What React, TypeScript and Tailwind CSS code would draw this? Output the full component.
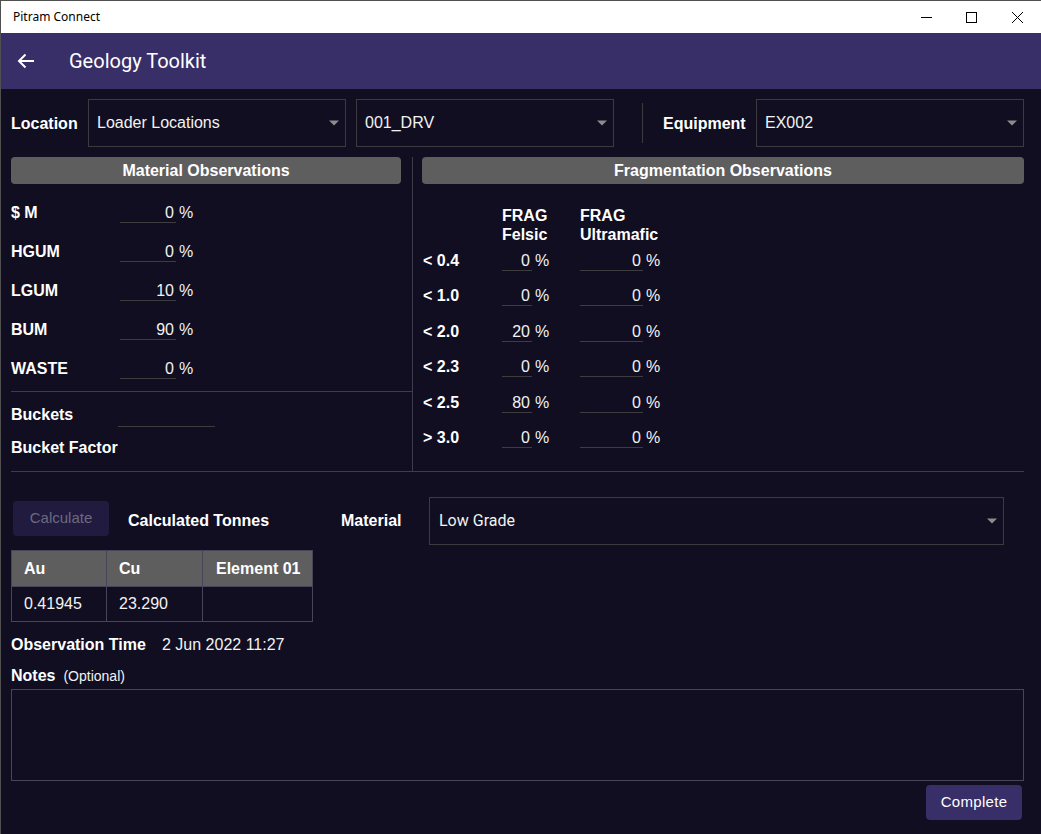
import React from "react";

const font = { fontFamily: '"Liberation Sans", Arial, sans-serif' };

function Caret() {
  return (
    <svg width="10" height="6" viewBox="0 0 10 6" className="shrink-0">
      <path d="M0 0.5 L10 0.5 L5 5.5 Z" fill="#8c8c8c" />
    </svg>
  );
}

function Select({ value, className }: { value: string; className: string }) {
  return (
    <div
      className={`flex items-center justify-between border border-[#3b3b3f] pl-[8px] pr-[6px] text-[16px] text-[#f2f2f2] ${className}`}
    >
      <span>{value}</span>
      <Caret />
    </div>
  );
}

function PctInput({ value, w }: { value: string; w: string }) {
  return (
    <div className="flex items-center">
      <div className={`h-[20px] ${w} border-b border-[#3d3d40] text-right pr-[2px] text-[16px] leading-[19px] text-[#f2f2f2]`}>
        {value}
      </div>
      <span className="ml-[3px] text-[16px] text-[#f2f2f2]">%</span>
    </div>
  );
}

const material = [
  ["$ M", "0"],
  ["HGUM", "0"],
  ["LGUM", "10"],
  ["BUM", "90"],
  ["WASTE", "0"],
];

const frag = [
  ["< 0.4", "0", "0"],
  ["< 1.0", "0", "0"],
  ["< 2.0", "20", "0"],
  ["< 2.3", "0", "0"],
  ["< 2.5", "80", "0"],
  ["> 3.0", "0", "0"],
];

export default function App() {
  return (
    <div
      style={font}
      className="w-[1041px] h-[834px] overflow-hidden bg-[#100e20] border-t border-l border-[#505050] flex flex-col text-white"
    >
      {/* Title bar */}
      <div className="h-[32px] bg-white flex items-center shrink-0">
        <span className="ml-[12px] text-[12px] text-black" style={{ fontFamily: '"Noto Sans", "Liberation Sans", sans-serif' }}>
          Pitram Connect
        </span>
        <div className="ml-auto flex items-center">
          <svg width="46" height="32" viewBox="0 0 46 32">
            <line x1="18" y1="16.5" x2="29" y2="16.5" stroke="#000" strokeWidth="1" />
          </svg>
          <svg width="46" height="32" viewBox="0 0 46 32">
            <rect x="17.5" y="11.5" width="10" height="10" fill="none" stroke="#000" strokeWidth="1" />
          </svg>
          <svg width="46" height="32" viewBox="0 0 46 32">
            <path d="M17 11 L28 22 M28 11 L17 22" stroke="#000" strokeWidth="1" />
          </svg>
        </div>
      </div>

      {/* Header */}
      <div className="h-[56px] bg-[#382e68] flex items-center shrink-0">
        <svg width="20" height="20" viewBox="0 0 20 20" className="ml-[15px]">
          <path d="M18 10 H3 M9.5 3.5 L3 10 L9.5 16.5" fill="none" stroke="#fff" strokeWidth="2" />
        </svg>
        <span className="ml-[33px] text-[20px] text-white" style={{ fontFamily: "Roboto, sans-serif" }}>
          Geology Toolkit
        </span>
      </div>

      {/* Content */}
      <div className="flex-1 flex flex-col pl-[10px] pr-[17px]">
        {/* Row 1 */}
        <div className="mt-[10px] flex items-center h-[48px]">
          <span className="w-[77px] font-bold text-[16px] mt-[1px]">Location</span>
          <Select value="Loader Locations" className="w-[258px] h-[48px]" />
          <Select value="001_DRV" className="ml-[10px] w-[258px] h-[48px]" />
          <div className="ml-[28px] w-px h-[40px] bg-[#3b3b3f]" />
          <span className="ml-[20px] w-[93px] font-bold text-[16px] mt-[1px]">Equipment</span>
          <Select value="EX002" className="w-[268px] h-[48px]" />
        </div>

        {/* Observations */}
        <div className="mt-[10px] flex">
          {/* Material */}
          <div className="w-[401px] flex flex-col">
            <div className="mr-[11px] h-[27px] rounded-[4px] bg-[#5f5e5f] flex items-center justify-center font-bold text-[16px]">
              Material Observations
            </div>
            <div className="mt-[10px] flex flex-col">
              {material.map(([l, v]) => (
                <div key={l} className="h-[38.8px] flex items-center">
                  <span className="w-[109px] font-bold text-[16px]">{l}</span>
                  <PctInput value={v} w="w-[56px]" />
                </div>
              ))}
            </div>
            <div className="mt-[3px] h-px bg-[#3e3b4a]" />
            <div className="mt-[12px] h-[22px] flex items-center">
              <span className="w-[107px] font-bold text-[16px]">Buckets</span>
              <div className="h-[22px] w-[97px] border-b border-[#3d3d40] mt-[2px]" />
            </div>
            <div className="mt-[11px] h-[22px] flex items-center">
              <span className="font-bold text-[16px]">Bucket Factor</span>
            </div>
          </div>
          <div className="w-px bg-[#3e3b4a]" />
          {/* Fragmentation */}
          <div className="flex-1 pl-[9px] flex flex-col">
            <div className="h-[27px] rounded-[4px] bg-[#5f5e5f] flex items-center justify-center font-bold text-[16px]">
              Fragmentation Observations
            </div>
            <div className="pt-[22px] flex pl-[80px] font-bold text-[16px] leading-[19px]">
              <div className="w-[78px]">
                FRAG
                <br />
                Felsic
              </div>
              <div>
                FRAG
                <br />
                Ultramafic
              </div>
            </div>
            <div className="flex flex-col -mt-[1px] pb-[15px]">
              {frag.map(([l, a, b]) => (
                <div key={l} className="h-[35.5px] flex items-center">
                  <span className="w-[80px] pl-[1px] font-bold text-[16px]">{l}</span>
                  <div className="w-[78px]">
                    <PctInput value={a} w="w-[30px]" />
                  </div>
                  <PctInput value={b} w="w-[63px]" />
                </div>
              ))}
            </div>
          </div>
        </div>
        <div className="h-px bg-[#3e3b4a]" />

        {/* Calculate row */}
        <div className="mt-[25px] h-[48px] flex items-center">
          <button className="ml-[2px] w-[96px] h-[35px] rounded-[4px] bg-[#211b3f] text-[15px] text-[#6c6a80] -mt-[6px]">
            Calculate
          </button>
          <span className="ml-[19px] w-[213px] font-bold text-[16px]">Calculated Tonnes</span>
          <span className="w-[88px] font-bold text-[16px]">Material</span>
          <div
            className="w-[575px] h-[48px] flex items-center justify-between border border-[#3b3b3f] pl-[9px] pr-[6px] text-[16px] text-[#f2f2f2]"
            style={{ fontFamily: "Roboto, sans-serif" }}
          >
            <span>Low Grade</span>
            <Caret />
          </div>
        </div>

        {/* Table */}
        <div className="mt-[5px] w-[302px] border border-[#4a4458] text-[16px]">
          <div className="flex h-[35px] bg-[#5f5e5f] font-bold">
            <div className="w-[95px] border-r border-[#4a4458] flex items-center pl-[12px]">Au</div>
            <div className="w-[96px] border-r border-[#4a4458] flex items-center pl-[12px]">Cu</div>
            <div className="flex-1 flex items-center pl-[13px]">Element 01</div>
          </div>
          <div className="flex h-[35px] border-t border-[#4a4458] text-[#f2f2f2]">
            <div className="w-[95px] border-r border-[#4a4458] flex items-center pl-[12px]">0.41945</div>
            <div className="w-[96px] border-r border-[#4a4458] flex items-center pl-[12px]">23.290</div>
            <div className="flex-1" />
          </div>
        </div>

        <div className="mt-[12px] h-[22px] flex items-center text-[16px]">
          <span className="w-[151px] font-bold">Observation Time</span>
          <span className="text-[#f2f2f2]">2 Jun 2022 11:27</span>
        </div>
        <div className="mt-[9px] h-[22px] flex items-center">
          <span className="font-bold text-[16px]">Notes</span>
          <span className="ml-[8px] text-[14px] text-[#f2f2f2]">(Optional)</span>
        </div>
        <div className="mt-[2px] h-[92px] border border-[#4a4458]" />
        <div className="mt-[4px] flex justify-end pr-[2px]">
          <button className="w-[96px] h-[35px] rounded-[4px] bg-[#382e68] text-[15px] text-white tracking-[0.3px]">
            Complete
          </button>
        </div>
      </div>
    </div>
  );
}
